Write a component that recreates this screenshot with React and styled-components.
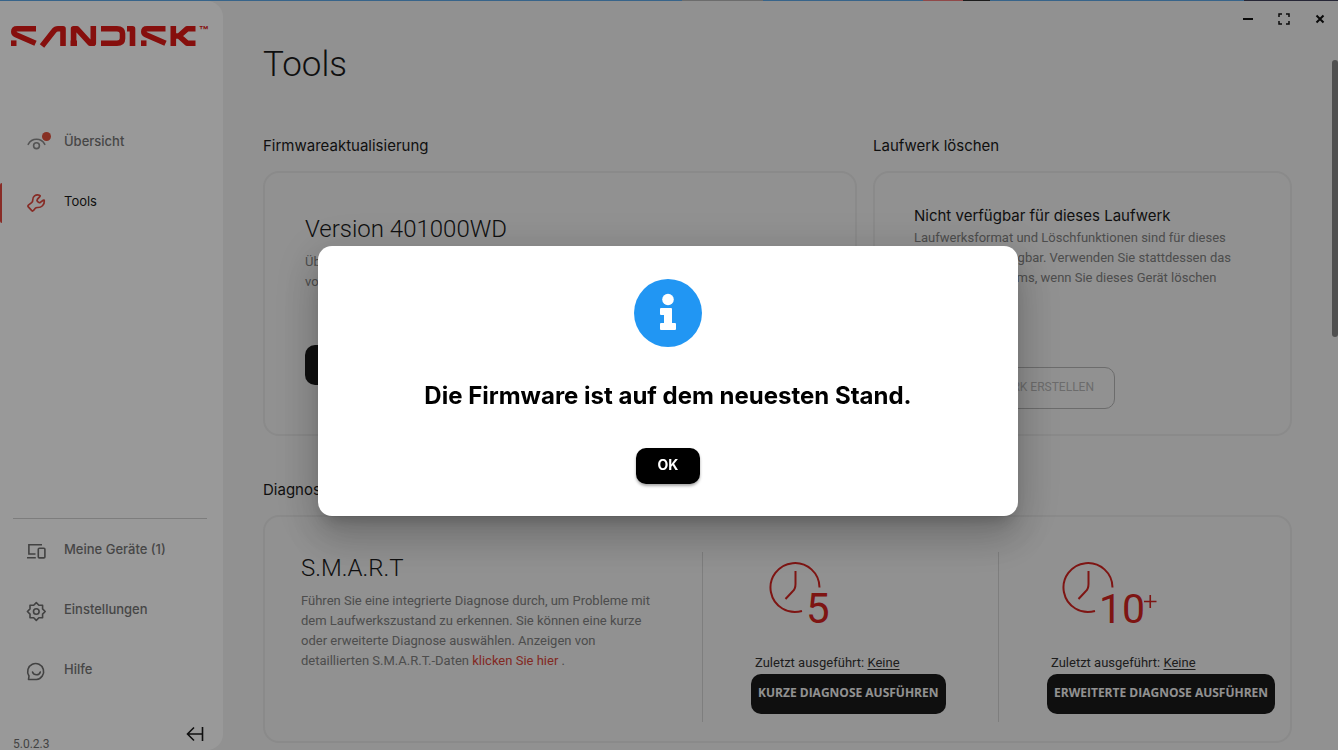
import React from 'react'
import { useState } from 'react'
import styled, { createGlobalStyle } from 'styled-components'

const GlobalStyle = createGlobalStyle`
  * {
    box-sizing: border-box;
  }

  body {
    margin: 0;
    font-family: Roboto, "Liberation Sans", sans-serif;
    color: #1a1a1a;
  }

  h1, h2, h3, p {
    margin: 0;
    font-weight: 400;
  }

  button {
    border: 0;
    background: none;
    cursor: pointer;
  }

  svg {
    display: block;
    flex: none;
  }
`

const Shell = styled.div`
  height: 100vh;
  display: flex;
  flex-direction: column;
  overflow: hidden;
  background: #f2f2f2;
`

const DesktopStrip = styled.div`
  height: 1px;
  flex: none;
  background: linear-gradient(
    to right,
    #5da7e6 51%, #b4b4b4 51%, #b4b4b4 57%,
    #5da7e6 57%, #5da7e6 69%, #f07878 69%, #f07878 72%,
    #303030 72%, #303030 74%, #5da7e6 74%, #5da7e6 93%,
    #40405a 93%
  );
`

const Columns = styled.div`
  flex: 1;
  min-height: 0;
  display: flex;
`

const Sidebar = styled.aside`
  width: 223px;
  flex: none;
  display: flex;
  flex-direction: column;
  padding-top: 19px;
  background: #fff;
  border-radius: 0 16px 16px 0;
`

const LogoLink = styled.a`
  display: block;
  padding-left: 11px;
  margin-bottom: 75px;
`

const NavGroup = styled.nav`
  display: flex;
  flex-direction: column;
  gap: 20px;
`

const BottomGroup = styled.div`
  margin-top: auto;

  hr {
    border: 0;
    border-top: 1px solid #d0d0d0;
    margin: 0 16px 12px 13px;
  }
`

const NavItem = styled.a`
  height: 40px;
  display: flex;
  align-items: center;
  gap: 18px;
  padding-left: 24px;
  border-left: 2px solid ${props => props.$active ? '#e54a40' : 'transparent'};
  border-radius: 2px;
  color: ${props => props.$muted ? '#8c8c8c' : '#6e6e6e'};
  text-decoration: none;

  svg {
    overflow: visible;
  }

  span {
    padding-bottom: 4px;
    font: ${props => props.$active ? 400 : 500} 13px/16px Inter, sans-serif;
    color: ${props => props.$active ? '#1a1a1a' : '#767676'};
  }
`

const SideFooter = styled.div`
  height: 59px;
  display: flex;
  justify-content: space-between;
  align-items: flex-end;
  padding: 0 19px 0 13px;
  font-size: 12px;
  line-height: 12px;
  color: #707070;

  button {
    padding: 0 0 8px;
  }
`

const Main = styled.main`
  flex: 1;
  min-width: 0;
  display: flex;
  flex-direction: column;
`

const TitleBar = styled.div`
  height: 36px;
  flex: none;
  display: flex;
  justify-content: flex-end;

  button {
    width: 36px;
    padding: 0;
    display: flex;
    align-items: center;
    justify-content: center;
  }
`

const ScrollArea = styled.div`
  flex: 1;
  min-height: 0;
  display: flex;
`

const Content = styled.div`
  flex: 1;
  min-width: 0;
  padding: 4px 40px 0;
`

const ScrollRail = styled.div`
  width: 6px;
  padding-top: 23px;

  div {
    height: 277px;
    border-radius: 3px;
    background: #868686;
  }
`

const PageTitle = styled.h1`
  font-size: 35px;
  line-height: 48px;
  && {
    font-weight: 300;
  }
  margin-bottom: 45px;
`

const ToolGrid = styled.div`
  display: grid;
  grid-template-columns: 594fr 419fr;
  column-gap: 16px;
  row-gap: 42px;
`

const Section = styled.section`
  min-width: 0;
  display: flex;
  flex-direction: column;
  gap: 13px;
  grid-column: ${props => props.$wide ? '1 / -1' : 'auto'};

  > h2 {
    font: 400 15px/24px Inter, sans-serif;
  }
`

const Card = styled.div`
  flex: 1;
  display: flex;
  flex-direction: column;
  align-items: flex-start;
  min-height: 265px;
  padding: ${props => props.$pad};
  border: 2px solid #e6e6e6;
  border-radius: 16px;
`

const SmartCard = styled.div`
  min-height: 228px;
  display: grid;
  grid-template-columns: 437fr 296fr 292fr;
  padding: 35px 0 19px;
  border: 2px solid #e6e6e6;
  border-radius: 16px;
`

const BigHeading = styled.h3`
  font-size: 24px;
  line-height: 32px;
  && {
    font-weight: 300;
  }
  margin-bottom: 7px;
`

const SmallHeading = styled.h3`
  font: 400 15px/24px Inter, sans-serif;
`

const Copy = styled.p`
  font-size: 13px;
  line-height: 20px;
  color: #808080;

  a {
    color: #d9463a;
    text-decoration: none;
  }
`

const SmartIntro = styled.div`
  padding-left: 36px;
`

const TestColumn = styled.div`
  display: flex;
  flex-direction: column;
  align-items: flex-start;
  padding: 8px 0 0 48px;
  border-left: 1px solid #d2d2d2;

  svg {
    margin: 0 0 13px ${props => props.$extended ? 14 : 17}px;
  }

  p {
    padding-left: 4px;
    font-size: 13px;
    line-height: 20px;
    color: #333;
    margin-bottom: 1px;
  }

  a {
    color: inherit;
    text-underline-offset: 2px;
  }
`

const SolidButton = styled.button`
  height: 40px;
  padding: 0 ${props => props.$wide ? 16 : 7}px 2px;
  border-radius: 10px;
  background: #1a1a1a;
  color: #f2f2f2;
  font: 700 12px/16px "Open Sans", sans-serif;
  white-space: nowrap;
  margin-top: ${props => props.$bottom ? 'auto' : 0};
`

const OutlineButton = styled.button`
  min-width: 201px;
  height: 42px;
  margin-top: auto;
  padding: 0 20px 2px;
  border: 1px solid #b4b4b4;
  border-radius: 10px;
  color: #b4b4b4;
  font: 400 12px/16px Roboto, sans-serif;
  text-align: right;
`

const Backdrop = styled.div`
  position: fixed;
  inset: 0;
  display: flex;
  align-items: center;
  justify-content: center;
  padding: 12px 2px 0 0;
  background: rgba(0, 0, 0, 0.4);
`

const Dialog = styled.div`
  width: 700px;
  max-width: 90%;
  display: flex;
  flex-direction: column;
  align-items: center;
  padding: 33px 24px 32px;
  border-radius: 14px;
  background: #fff;
  box-shadow:
    0 11px 15px -7px rgba(0, 0, 0, 0.2),
    0 24px 38px 3px rgba(0, 0, 0, 0.14),
    0 9px 46px 8px rgba(0, 0, 0, 0.12);

  h2 {
    margin: 33px 0 36px;
    font: 700 24px/32px Inter, sans-serif;
    color: #000;
    text-align: center;
  }
`

const OkButton = styled.button`
  width: 64px;
  height: 36px;
  padding: 0 0 2px;
  border-radius: 10px;
  background: #000;
  color: #fff;
  font: 700 14px/16px Inter, sans-serif;
  box-shadow: 0 2px 3px rgba(0, 0, 0, 0.35);
`

function Logo() {
  return (
    <svg width="206" height="28" viewBox="0 -6 206 28" role="img" aria-label="SanDisk">
      <g fill="none" stroke="#e01a16" strokeWidth="5.6" strokeLinejoin="round">
        <path d="M25 2.800H6Q2.800 2.800 2.800 5.800Q2.800 7.800 5 8.800L24.500 17.300" />
        <path d="M0 17.200H5.500" />
        <path d="M31 20L43 4.800Q44.500 2.800 47 2.800H52V20" />
        <path d="M59.500 17.200H66M62.600 20V2.800H66L79 17.200H82.300V0" />
        <path d="M90 2.800H106Q111.500 2.800 111.500 7.500V12.500Q111.500 17.200 106 17.200H90" />
        <path d="M116 2.800H121.500V20" />
        <path d="M154.500 2.800H136Q132.800 2.800 132.800 5.800Q132.800 7.800 135 8.800L154.500 17.300" />
        <path d="M130 17.200H135.500" />
        <path d="M162.300 0V20M162 10H168L176 2.800H184.500M168 10L176 17.200H184.500" />
      </g>
      <text x="188" y="11" fontSize="15" fontWeight="600" fontFamily="Inter, sans-serif" fill="#e01a16">™</text>
    </svg>
  )
}

function EyeIcon() {
  return (
    <svg width="20" height="24" viewBox="0 0 20 24" fill="none">
      <path d="M2.200 13.300Q5 8.300 10.500 8.300T18.800 13.300" stroke="currentColor" strokeWidth="1.600" strokeLinecap="round" />
      <circle cx="10.500" cy="14.700" r="2.900" stroke="currentColor" strokeWidth="1.600" />
      <circle cx="20.500" cy="5.500" r="4.500" fill="#e2503c" />
    </svg>
  )
}

function WrenchIcon() {
  return (
    <svg width="20" height="20" viewBox="0 0 20 20" fill="none" stroke="#e0483e" strokeWidth="1.700" strokeLinejoin="round">
      <path d="M13.500 2.200C9.500 1.200 6.500 3.500 6.700 7.200Q6.800 8.700 5.600 9.700L2.400 12.200Q1.500 13 2.300 13.900L5.800 17.700Q6.600 18.400 7.500 17.500L9.300 15.300Q10 14.500 11.300 14.500C15.500 14.800 18.600 11.800 18.300 7.700Q18.200 6.600 17.200 7.200L14.300 9.400Q13.300 10 12.300 9.200L11.300 8.200Q10.600 7.300 11.300 6.400L14 3.400Q14.500 2.600 13.500 2.200Z" />
    </svg>
  )
}

function DevicesIcon() {
  return (
    <svg width="20" height="18" viewBox="0 0 20 18" fill="none" stroke="currentColor" strokeWidth="1.600">
      <path d="M16 2.800H2.900V12H9.500M1 15.700H9.800" />
      <rect x="12.300" y="6.300" width="6.600" height="9.600" rx="1" />
    </svg>
  )
}

function GearIcon() {
  const points = Array.from({ length: 16 }, (_, i) => {
    const r = i % 2 ? 6.8 : 8.9
    const a = (i * Math.PI) / 8
    return `${10.3 + r * Math.sin(a)},${10.5 - r * Math.cos(a)}`
  }).join(' ')

  return (
    <svg width="20" height="20" viewBox="0 0 20 20" fill="none" stroke="currentColor" strokeWidth="1.600" strokeLinejoin="round">
      <polygon points={points} />
      <circle cx="10.300" cy="10.500" r="2.800" />
    </svg>
  )
}

function HelpIcon() {
  return (
    <svg width="20" height="20" viewBox="0 0 20 20" fill="none" stroke="currentColor" strokeWidth="1.600" strokeLinecap="round" strokeLinejoin="round">
      <path d="M2.500 18.500L3 15A8 8 0 1 1 10.500 18.500Z" />
      <path d="M6.500 11Q7.500 13.800 10.500 13.800T14.300 11" />
    </svg>
  )
}

function CollapseIcon() {
  return (
    <svg width="18" height="16" viewBox="0 0 18 16" fill="none" stroke="#1a1a1a" strokeWidth="1.600">
      <path d="M8 1.500L1.500 8L8 14.500M1.500 8H16M16.500 1V15" />
    </svg>
  )
}

function ClockIcon({ label, plus }) {
  return (
    <svg width="100" height="80" viewBox="0 0 100 80" fill="none" stroke="#d22320" strokeWidth="2">
      <path d="M51.500 27.500A24.500 24.500 0 1 0 34 51" />
      <path d="M27.500 11V24Q27.500 29 24.500 31.500L17.500 39" />
      <text x="38" y="63" fontSize={plus ? 41 : 42} fontFamily="Roboto, sans-serif" fill="#d22320" stroke="none">{label}</text>
      {plus && <path d="M83 41.500H95.500M89.250 35V48" strokeWidth="1.600" />}
    </svg>
  )
}

function InfoIcon() {
  return (
    <svg width="68" height="68" viewBox="0 0 68 68">
      <circle cx="34" cy="34" r="34" fill="#2196f3" />
      <circle cx="34" cy="20.500" r="5.800" fill="#fff" />
      <path d="M27 29H37Q38 29 38 30V44H41Q42 44 42 45V50Q42 51 41 51H27Q26 51 26 50V45Q26 44 27 44H30V36H27Q26 36 26 35V30Q26 29 27 29Z" fill="#fff" />
    </svg>
  )
}

function WindowControls() {
  return (
    <TitleBar>
      <button aria-label="Minimieren">
        <svg width="10" height="10" viewBox="0 0 10 10" stroke="#111" strokeWidth="2"><path d="M0 5H10" /></svg>
      </button>
      <button aria-label="Maximieren">
        <svg width="12" height="12" viewBox="0 0 12 12" fill="none" stroke="#111" strokeWidth="1.500">
          <path d="M1 4V1H4M8 1H11V4M11 8V11H8M4 11H1V8" />
        </svg>
      </button>
      <button aria-label="Schließen">
        <svg width="10" height="10" viewBox="0 0 10 10" stroke="#111" strokeWidth="2"><path d="M1.500 1.500L8.500 8.500M8.500 1.500L1.500 8.500" /></svg>
      </button>
    </TitleBar>
  )
}

export default function App() {

  const [isDialogOpen, setDialogOpen] = useState(true)

  const okClicked = function() {
    setDialogOpen(false)
  }

  const searchClicked = function() {
    setDialogOpen(true)
  }

  return (
    <>
      <GlobalStyle />
      <Shell>
        <DesktopStrip />
        <Columns>
          <Sidebar>
            <LogoLink href="#"><Logo /></LogoLink>
            <NavGroup>
              <NavItem href="#" $muted><EyeIcon /><span>Übersicht</span></NavItem>
              <NavItem href="#" $active><WrenchIcon /><span>Tools</span></NavItem>
            </NavGroup>
            <BottomGroup>
              <hr />
              <NavGroup>
                <NavItem href="#"><DevicesIcon /><span>Meine Geräte (1)</span></NavItem>
                <NavItem href="#"><GearIcon /><span>Einstellungen</span></NavItem>
                <NavItem href="#"><HelpIcon /><span>Hilfe</span></NavItem>
              </NavGroup>
            </BottomGroup>
            <SideFooter>
              <span>5.0.2.3</span>
              <button aria-label="Menü einklappen"><CollapseIcon /></button>
            </SideFooter>
          </Sidebar>
          <Main>
            <WindowControls />
            <ScrollArea>
              <Content>
                <PageTitle>Tools</PageTitle>
                <ToolGrid>
                  <Section>
                    <h2>Firmwareaktualisierung</h2>
                    <Card $pad="40px 40px 49px">
                      <BigHeading>Version 401000WD</BigHeading>
                      <Copy>Überprüfen Sie, ob eine neue Firmware<br />vorhanden ist.</Copy>
                      <SolidButton $wide $bottom onClick={searchClicked}>NACH UPDATES SUCHEN</SolidButton>
                    </Card>
                  </Section>
                  <Section>
                    <h2>Laufwerk löschen</h2>
                    <Card $pad="31px 39px 25px">
                      <SmallHeading>Nicht verfügbar für dieses Laufwerk</SmallHeading>
                      <Copy>
                        Laufwerksformat und Löschfunktionen sind für dieses<br />
                        Modell nicht verfügbar. Verwenden Sie stattdessen das<br />
                        des Betriebssystems, wenn Sie dieses Gerät löschen<br />
                        möchten.
                      </Copy>
                      <OutlineButton disabled>LAUFWERK ERSTELLEN</OutlineButton>
                    </Card>
                  </Section>
                  <Section $wide>
                    <h2>Diagnose</h2>
                    <SmartCard>
                      <SmartIntro>
                        <BigHeading>S.M.A.R.T</BigHeading>
                        <Copy>
                          Führen Sie eine integrierte Diagnose durch, um Probleme mit<br />
                          dem Laufwerkszustand zu erkennen. Sie können eine kurze<br />
                          oder erweiterte Diagnose auswählen. Anzeigen von<br />
                          detaillierten S.M.A.R.T.-Daten <a href="#">klicken Sie hier</a> .
                        </Copy>
                      </SmartIntro>
                      <TestColumn>
                        <ClockIcon label="5" />
                        <p>Zuletzt ausgeführt: <a href="#">Keine</a></p>
                        <SolidButton>KURZE DIAGNOSE AUSFÜHREN</SolidButton>
                      </TestColumn>
                      <TestColumn $extended>
                        <ClockIcon label="10" plus />
                        <p>Zuletzt ausgeführt: <a href="#">Keine</a></p>
                        <SolidButton>ERWEITERTE DIAGNOSE AUSFÜHREN</SolidButton>
                      </TestColumn>
                    </SmartCard>
                  </Section>
                </ToolGrid>
              </Content>
              <ScrollRail><div /></ScrollRail>
            </ScrollArea>
          </Main>
        </Columns>
      </Shell>
      {isDialogOpen && (
        <Backdrop>
          <Dialog role="dialog" aria-modal="true" aria-labelledby="firmware-message">
            <InfoIcon />
            <h2 id="firmware-message">Die Firmware ist auf dem neuesten Stand.</h2>
            <OkButton onClick={okClicked}>OK</OkButton>
          </Dialog>
        </Backdrop>
      )}
    </>
  )
}
